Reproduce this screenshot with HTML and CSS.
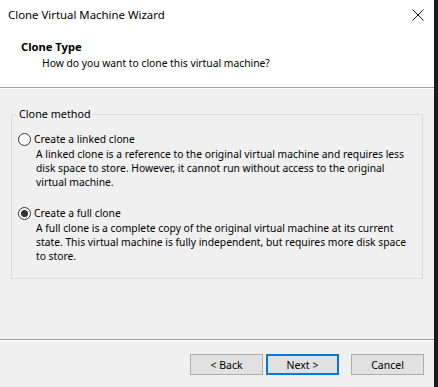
FILE: index.html
```html
<!DOCTYPE html>
<html>
<head>
<meta charset="utf-8">
<link rel="stylesheet" href="styles.css">
</head>
<body>
<div class="window">
  <div class="titlebar">
    <span class="title">Clone Virtual Machine Wizard</span>
    <svg class="close" width="12" height="12" viewBox="0 0 12 12"><path d="M0.5 0.5 L11.5 11.5 M11.5 0.5 L0.5 11.5" stroke="#111" stroke-width="1" fill="none"/></svg>
  </div>
  <div class="header">
    <div class="h-title">Clone Type</div>
    <div class="h-sub">How do you want to clone this virtual machine?</div>
  </div>
  <div class="content">
    <fieldset class="group">
      <legend>Clone method</legend>
      <div class="option first">
        <div class="opt-label"><span class="radio"></span><span>Create a linked clone</span></div>
        <div class="desc">A linked clone is a reference to the original virtual machine and requires less disk space to store. However, it cannot run without access to the original virtual machine.</div>
      </div>
      <div class="option second">
        <div class="opt-label"><span class="radio checked"></span><span>Create a full clone</span></div>
        <div class="desc">A full clone is a complete copy of the original virtual machine at its current state. This virtual machine is fully independent, but requires more disk space to store.</div>
      </div>
    </fieldset>
  </div>
  <div class="footer">
    <button class="btn">&lt; Back</button>
    <button class="btn default">Next &gt;</button>
    <button class="btn cancel">Cancel</button>
  </div>
</div>
</body>
</html>
```
FILE: styles.css
```css
html, body {
  margin: 0;
  padding: 0;
  background: #1c1c1c;
}
body {
  width: 438px;
  height: 387px;
  overflow: hidden;
  font-family: "Noto Sans", "Open Sans", sans-serif;
  font-size: 10.3px;
  color: #000;
}
.window {
  width: 434px;
  height: 387px;
  background: #f0f0f0;
  display: flex;
  flex-direction: column;
}
.titlebar {
  height: 31px;
  background: #fff;
  display: flex;
  align-items: center;
  justify-content: space-between;
  padding: 0 10px 0 8px;
}
.title {
  font-size: 11.4px;
  line-height: 16px;
  margin-top: -2px;
}
.close {
  display: block;
  margin-top: -1px;
}
.header {
  height: 57px;
  background: #fff;
  border-bottom: 1px solid #a0a0a0;
  box-shadow: 0 1px 0 #fff;
  padding-left: 21px;
  padding-top: 8px;
  box-sizing: border-box;
}
.h-title {
  font-weight: bold;
  font-size: 11.2px;
  line-height: 16px;
}
.h-sub {
  padding-left: 21px;
  line-height: 16px;
}
.content {
  height: 252px;
  padding: 18px 11px 0 11px;
  box-sizing: border-box;
  border-bottom: 1px solid #a0a0a0;
}
.group {
  margin: 0;
  padding: 0;
  border: 1px solid #dcdcdc;
  height: 173px;
  box-sizing: border-box;
  width: 412px;
}
.group legend {
  margin-left: 5px;
  padding: 0 2px;
  font-size: 10.8px;
  line-height: 16px;
}
.option {
  display: flex;
  flex-direction: column;
}
.option.first {
  margin-top: 9px;
}
.option.second {
  margin-top: 16px;
}
.opt-label {
  display: flex;
  align-items: center;
  height: 16px;
  padding-left: 6px;
  gap: 3px;
}
.radio {
  width: 13px;
  height: 13px;
  border: 1px solid #333;
  border-radius: 50%;
  box-sizing: border-box;
  background: #fff;
  display: flex;
  align-items: center;
  justify-content: center;
}
.radio.checked::after {
  content: "";
  width: 7px;
  height: 7px;
  border-radius: 50%;
  background: #333;
}
.desc {
  padding-left: 24px;
  padding-right: 10px;
  line-height: 14px;
}
.footer {
  flex: 1;
  display: flex;
  align-items: flex-start;
  padding-top: 14px;
  padding-left: 190px;
  box-shadow: inset 0 1px 0 #fff;
}
.btn {
  width: 73px;
  height: 21px;
  margin: 0;
  background: #e1e1e1;
  border: 1px solid #adadad;
  font-family: inherit;
  font-size: 10.5px;
  color: #000;
  padding: 0;
  line-height: 16px;
}
.btn.default {
  border: 2px solid #0078d7;
  margin-left: 3px;
}
.btn.cancel {
  margin-left: 12px;
}
```
